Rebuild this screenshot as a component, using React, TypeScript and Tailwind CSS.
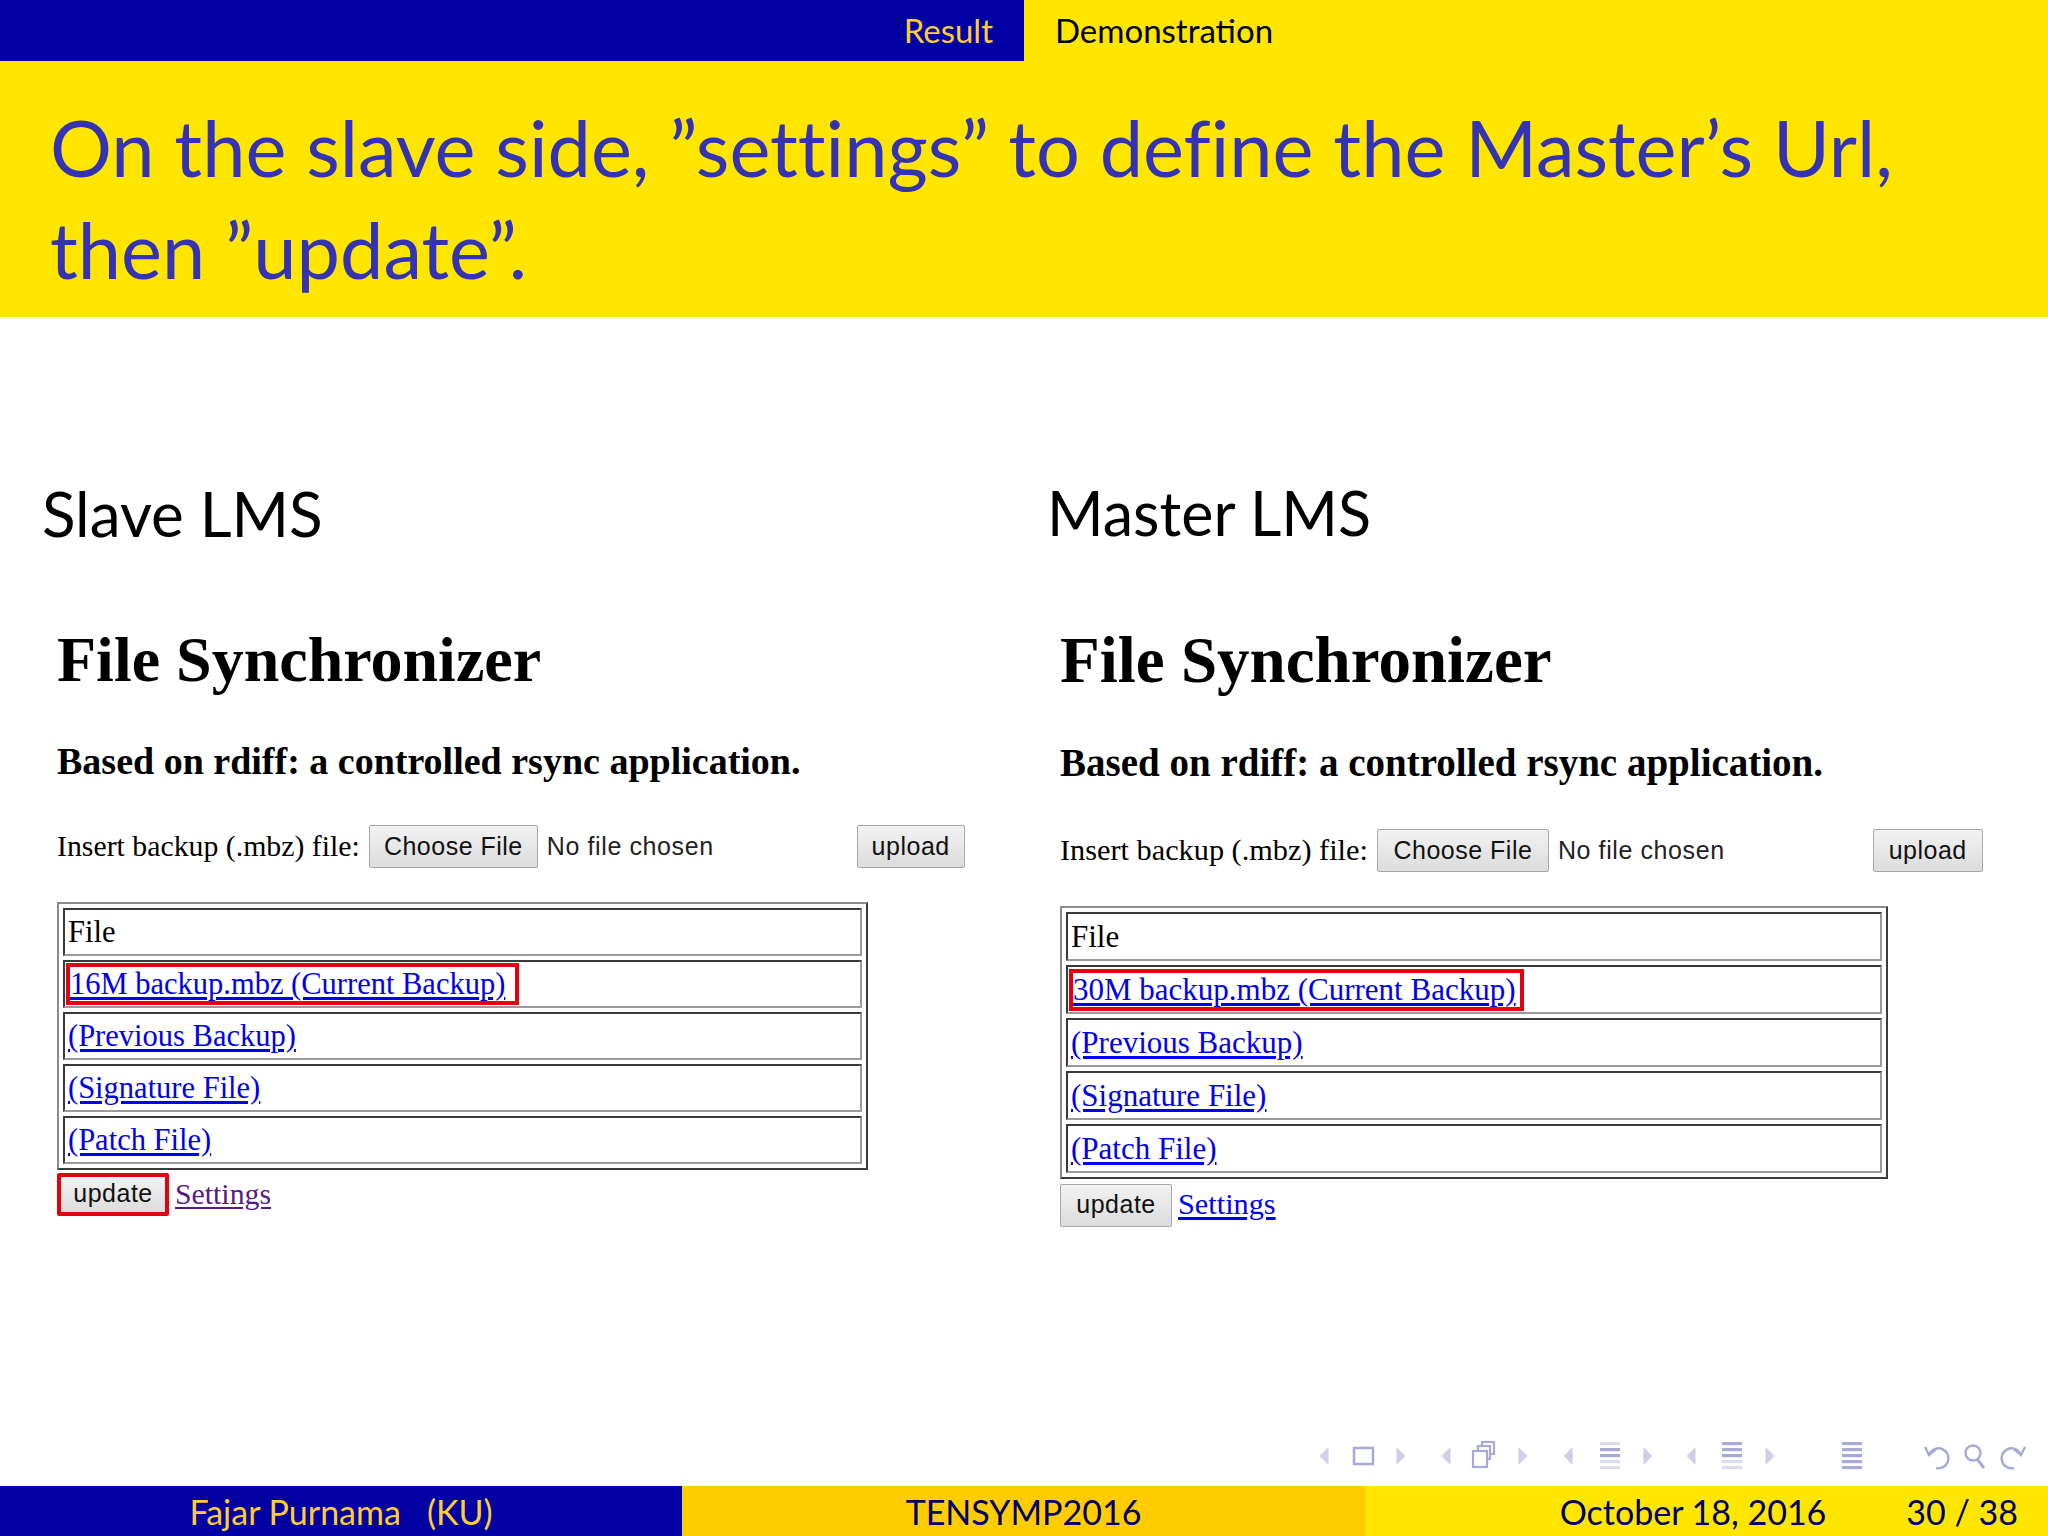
import React from "react";

const SANS = { fontFamily: "Lato, 'Open Sans', sans-serif" };
const SERIF = { fontFamily: "'Liberation Serif', 'Times New Roman', serif" };
const UI = { fontFamily: "'Liberation Sans', Arial, sans-serif" };

type Dims = {
  h1: string;
  h3: string;
  label: string;
  text: string;
  rowH: string;
  tableW: string;
  chooseW: string;
  uploadW: string;
  uploadMl: string;
  btnH: string;
  gapH1: string;
  gapH3: string;
  gapRow: string;
  gapTable: string;
  current: string;
  boxPr: string;
  settings: string;
  highlightUpdate: boolean;
};

function Btn({ children, w, h, red }: { children: React.ReactNode; w: string; h: string; red?: boolean }) {
  return (
    <span
      style={UI}
      className={`${w} ${h} inline-flex shrink-0 items-center justify-center rounded-[2px] bg-gradient-to-b from-[#f2f2f2] to-[#dcdcdc] text-[25px] tracking-[0.5px] text-[#111] ${
        red ? "border-4 border-[#e3000f]" : "border border-[#a7a7a7]"
      }`}
    >
      {children}
    </span>
  );
}

function Synchronizer({ d }: { d: Dims }) {
  const rows = ["(Previous Backup)", "(Signature File)", "(Patch File)"];
  const cell =
    "border-2 border-t-[#3a3a3a] border-l-[#3a3a3a] border-b-[#9a9a9a] border-r-[#9a9a9a] px-[3px] py-0 text-left align-middle";
  return (
    <div style={SERIF} className="text-black">
      <h1 className={`${d.h1} font-bold leading-[76px]`}>File Synchronizer</h1>
      <h3 className={`${d.h3} ${d.gapH1} font-bold leading-[44px]`}>
        Based on rdiff: a controlled rsync application.
      </h3>
      <div className={`${d.gapH3} flex items-center`}>
        <span className={`${d.label} mr-[9px]`}>Insert backup (.mbz) file:</span>
        <Btn w={d.chooseW} h={d.btnH}>
          Choose File
        </Btn>
        <span style={UI} className="ml-[9px] text-[25px] tracking-[0.6px] text-[#222]">
          No file chosen
        </span>
        <span className={d.uploadMl}>
          <Btn w={d.uploadW} h={d.btnH}>
            upload
          </Btn>
        </span>
      </div>
      <table
        className={`${d.gapRow} ${d.tableW} border-separate border-spacing-[4px] border-2 border-t-[#8c8c8c] border-l-[#8c8c8c] border-b-[#3c3c3c] border-r-[#3c3c3c]`}
      >
        <tbody className={`${d.text} leading-[36px]`}>
          <tr className={d.rowH}>
            <td className={cell}>File</td>
          </tr>
          <tr className={d.rowH}>
            <td className={`${cell} pl-[1px]`}>
              <span className={`inline-block border-4 border-[#e3000f] ${d.boxPr} align-middle leading-[34px]`}>
                <a className="text-[#0000ee] underline underline-offset-[3px]">{d.current}</a>
              </span>
            </td>
          </tr>
          {rows.map((r) => (
            <tr key={r} className={d.rowH}>
              <td className={cell}>
                <a className="text-[#0000ee] underline underline-offset-[3px]">{r}</a>
              </td>
            </tr>
          ))}
        </tbody>
      </table>
      <div className={`${d.gapTable} flex items-center gap-[6px]`}>
        <Btn w="w-[112px]" h={d.btnH} red={d.highlightUpdate}>
          update
        </Btn>
        <a className={`${d.label} ${d.settings} underline underline-offset-[3px]`}>Settings</a>
      </div>
    </div>
  );
}

// beamer navigation symbols, drawn as one strip (x = page x - 1300)
function NavBar() {
  const c = "#a9a9d6";
  const f = "#cfcfe9";
  const L = (x: number) => <polygon points={`${x + 4.5},11 ${x - 4.5},20 ${x + 4.5},29`} fill={f} />;
  const R = (x: number) => <polygon points={`${x - 4.5},11 ${x + 4.5},20 ${x - 4.5},29`} fill={f} />;
  const lines = (x: number, shade: string[]) =>
    shade.map((s, i) => <rect key={i} x={x - 10} y={6 + i * 6} width="20" height="3.2" fill={s} />);
  return (
    <div className="flex h-[50px] justify-end">
      <svg width="748" height="50" viewBox="0 0 748 50">
        {L(24)}
        <rect x="54" y="12" width="19" height="16" fill="none" stroke={c} strokeWidth="2.5" />
        {R(101)}
        {L(146)}
        <rect x="182" y="6" width="12" height="12" fill="white" stroke={c} strokeWidth="2.2" />
        <rect x="178" y="10" width="12" height="13" fill="white" stroke={c} strokeWidth="2.2" />
        <rect x="173" y="15" width="14" height="16" fill="white" stroke={c} strokeWidth="2.2" />
        {R(223)}
        {L(268)}
        {lines(310, ["#dcdcef", c, c, "#dcdcef", "#dcdcef"])}
        {R(348)}
        {L(391)}
        {lines(432, [c, c, c, "#dcdcef", "#dcdcef"])}
        {R(470)}
        {lines(552, [c, c, c, c, c])}
        <path d="M630 17 A10 10 0 1 1 636 32" fill="none" stroke={c} strokeWidth="2.4" />
        <path d="M625 11 L629 19 L636 13" fill="none" stroke={c} strokeWidth="2.4" />
        <circle cx="673" cy="17" r="7.5" fill="none" stroke={c} strokeWidth="2.4" />
        <path d="M677 23 L684 32" stroke={c} strokeWidth="3" />
        <path d="M720 17 A10 10 0 1 0 714 32" fill="none" stroke={c} strokeWidth="2.4" />
        <path d="M725 11 L721 19 L714 13" fill="none" stroke={c} strokeWidth="2.4" />
      </svg>
    </div>
  );
}

export default function App() {
  const left: Dims = {
    h1: "text-[64px]",
    h3: "text-[38px]",
    label: "text-[29.8px]",
    text: "text-[30.5px]",
    rowH: "h-[48px]",
    tableW: "w-[811px]",
    chooseW: "w-[169px]",
    uploadW: "w-[108px]",
    uploadMl: "ml-[143px]",
    btnH: "h-[43px]",
    gapH1: "mt-[41px]",
    gapH3: "mt-[41px]",
    gapRow: "mt-[33px]",
    gapTable: "mt-[2px]",
    current: "16M backup.mbz (Current Backup)",
    boxPr: "pr-[10px]",
    settings: "text-[#551a8b]",
    highlightUpdate: true,
  };
  const right: Dims = {
    h1: "text-[65px]",
    h3: "text-[39px]",
    label: "text-[30.3px]",
    text: "text-[31px]",
    rowH: "h-[49px]",
    tableW: "w-[828px]",
    chooseW: "w-[172px]",
    uploadW: "w-[110px]",
    uploadMl: "ml-[148px]",
    btnH: "h-[43px]",
    gapH1: "mt-[43px]",
    gapH3: "mt-[43px]",
    gapRow: "mt-[33px]",
    gapTable: "mt-[3px]",
    current: "30M backup.mbz (Current Backup)",
    boxPr: "pr-[4px]",
    settings: "text-[#0000ee]",
    highlightUpdate: false,
  };

  return (
    <div className="flex h-[1536px] w-[2048px] flex-col overflow-hidden bg-white">
      {/* header */}
      <div style={SANS} className="flex h-[61px] text-[33px]">
        <div className="flex w-[1024px] items-center justify-end bg-[#0000a3] pr-[31px] text-[#ffcc33]">
          Result
        </div>
        <div className="flex flex-1 items-center bg-[#ffe600] pl-[31px] text-black">Demonstration</div>
      </div>
      <div
        style={SANS}
        className="h-[256px] bg-[#ffe600] pl-[50px] pt-[36px] text-[77.5px] leading-[102px] text-[#3333b3] [font-variant-ligatures:none]"
      >
        On the slave side, &rdquo;settings&rdquo; to define the Master&rsquo;s Url,
        <br />
        then &rdquo;update&rdquo;.
      </div>

      {/* body */}
      <div className="flex flex-1 pt-[158px]">
        <div className="w-[1024px]">
          <div style={SANS} className="pl-[42px] text-[62px] leading-[76px] text-black">
            Slave LMS
          </div>
          <div className="mt-[71px] pl-[57px]">
            <Synchronizer d={left} />
          </div>
        </div>
        <div className="flex-1">
          <div style={SANS} className="pl-[23px] text-[61px] leading-[76px] text-black">
            Master LMS
          </div>
          <div className="mt-[71px] pl-[36px]">
            <Synchronizer d={right} />
          </div>
        </div>
      </div>

      <NavBar />

      {/* footer */}
      <div style={SANS} className="flex h-[50px] text-[34px]">
        <div className="flex w-[682px] items-center justify-center gap-[26px] bg-[#0000a3] text-[#ffcc33]">
          <span>Fajar Purnama</span>
          <span>(KU)</span>
        </div>
        <div className="flex w-[683px] items-center justify-center bg-[#ffcc00] text-[#000066]">TENSYMP2016</div>
        <div className="flex flex-1 items-center justify-end gap-[80px] bg-[#ffe600] pr-[30px] text-[#000066]">
          <span>October 18, 2016</span>
          <span>30 / 38</span>
        </div>
      </div>
    </div>
  );
}
